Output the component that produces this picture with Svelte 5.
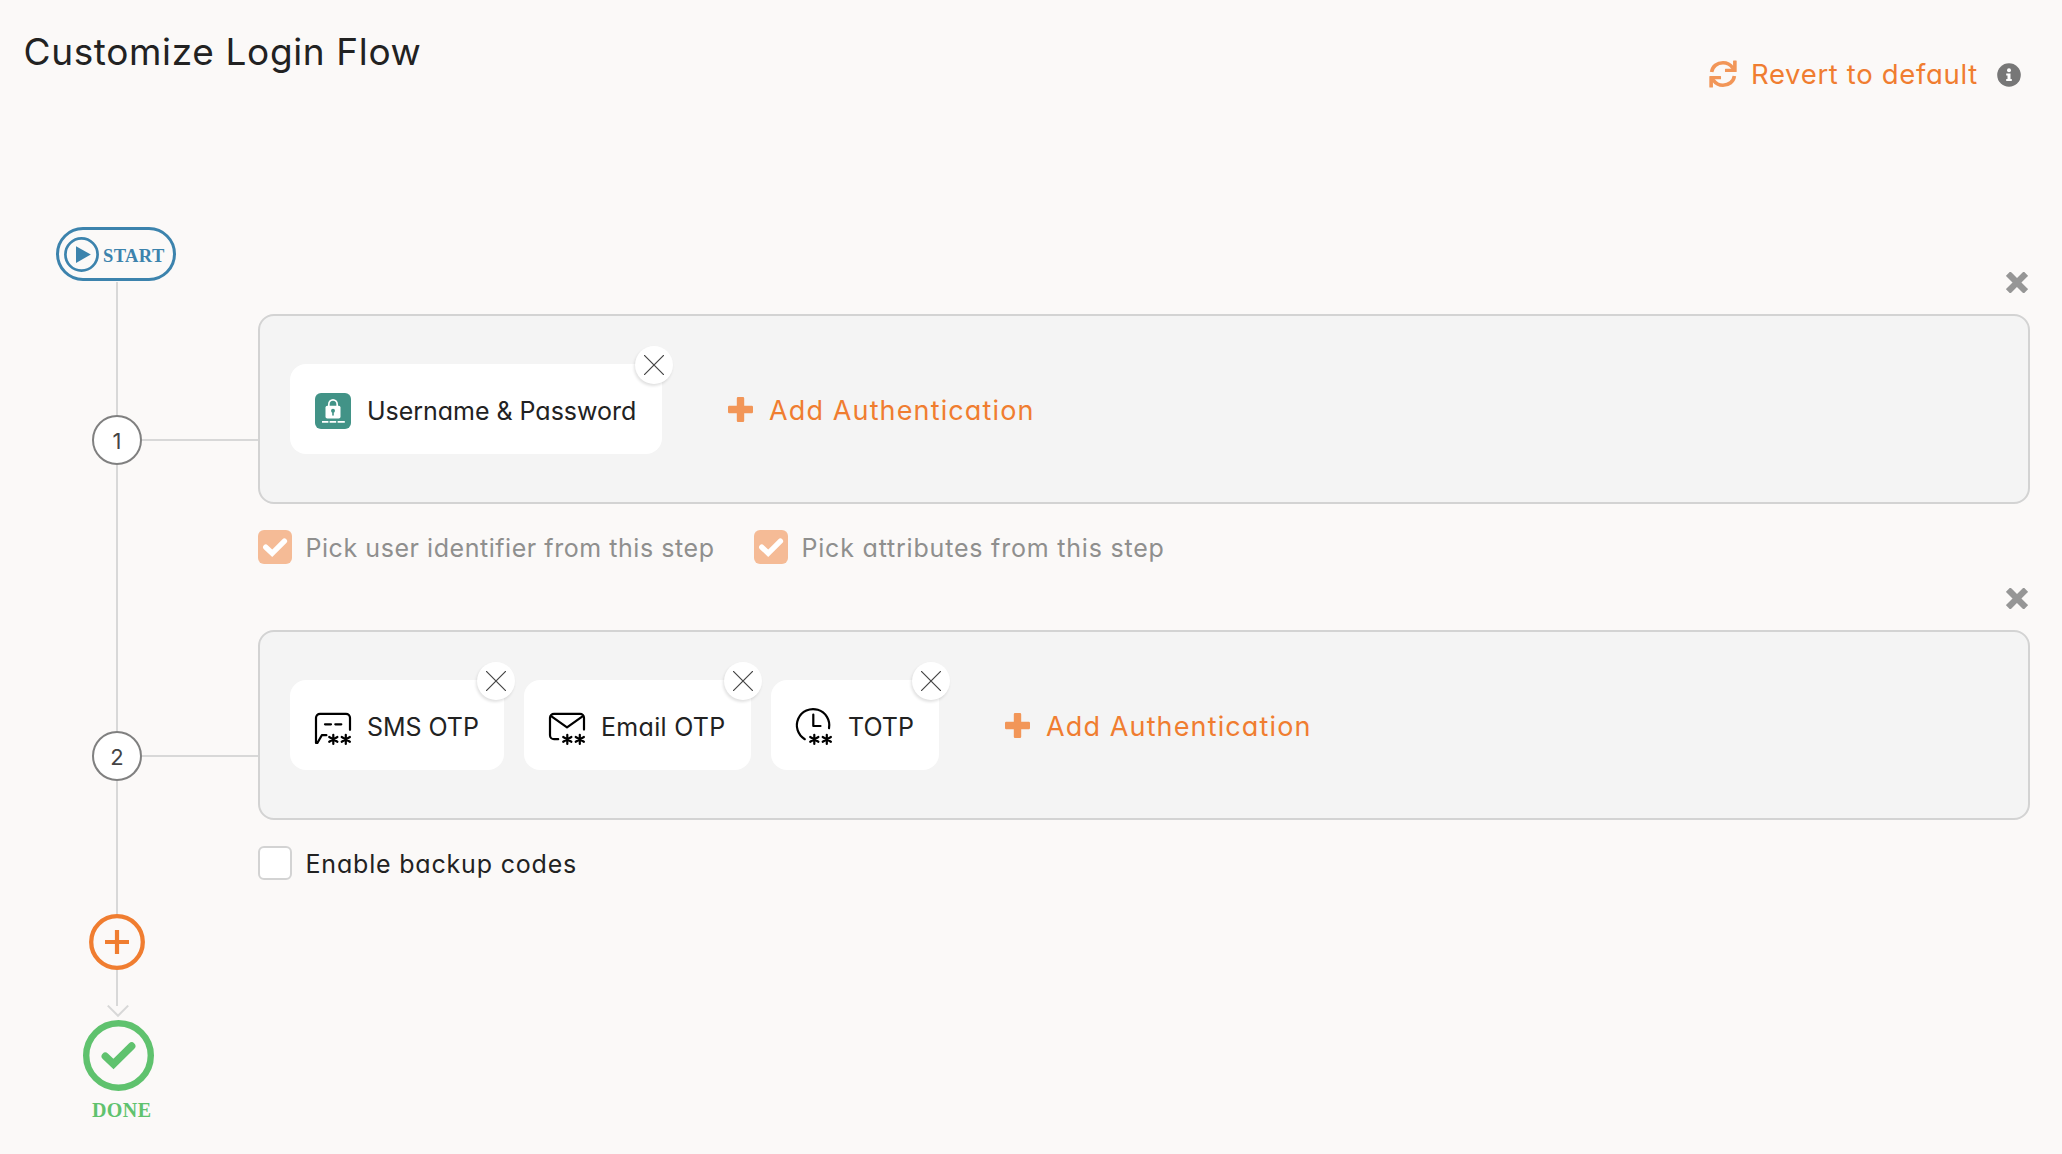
<script>
  const steps = [
    {
      methods: [{ icon: 'password', label: 'Username & Password', size: 'wide' }],
      options: [
        { label: 'Pick user identifier from this step', checked: true, kind: 'identifier' },
        { label: 'Pick attributes from this step', checked: true, kind: 'attributes' }
      ]
    },
    {
      methods: [
        { icon: 'sms', label: 'SMS OTP', size: 'sms' },
        { icon: 'email', label: 'Email OTP', size: 'email' },
        { icon: 'totp', label: 'TOTP', size: 'totp' }
      ],
      options: [{ label: 'Enable backup codes', checked: false, kind: 'backup' }]
    }
  ];
</script>

{#snippet stars()}
  <path d="M18.3 25.8v9.2M14.2 28l8.2 4.8M22.4 28l-8.2 4.8M30.8 25.8v9.2M26.7 28l8.2 4.8M34.9 28l-8.2 4.8" stroke-width="2.2" />
{/snippet}

{#snippet methodIcon(name)}
  {#if name === 'password'}
    <svg class="icon" viewBox="0 0 36 36">
      <rect width="36" height="36" rx="6" fill="#429387" />
      <path d="M13.8 14v-2.6a4.2 4.6 0 0 1 8.4 0V14" fill="none" stroke="#fff" stroke-width="1.7" />
      <rect x="10.5" y="12.8" width="15" height="12.8" rx="1.8" fill="#fff" />
      <circle cx="18" cy="17.8" r="2" fill="#429387" />
      <rect x="17.2" y="18" width="1.6" height="4.8" rx=".8" fill="#429387" />
      <path d="M7 28.8h6.4M14.6 28.8h6.6M22.6 28.8h7.2" stroke="#fff" stroke-width="1.7" />
    </svg>
  {:else if name === 'sms'}
    <svg class="icon line" viewBox="0 0 36 36">
      <path d="M35 20.8V8.8A4 4 0 0 0 31 4.8H5A4 4 0 0 0 1 8.8V34H2.4L6.8 26.2H11.4" />
      <path d="M10 15.3h6M20.3 15.3h6" />
      {@render stars()}
    </svg>
  {:else if name === 'email'}
    <svg class="icon line" viewBox="0 0 36 36">
      <path d="M35 20.6V8.8A4 4 0 0 0 31 4.8H5A4 4 0 0 0 1 8.8V26.2A4 4 0 0 0 5 30.2H9.2" />
      <path d="M1.8 6.8L18 18.4 34.2 6.8" />
      {@render stars()}
    </svg>
  {:else}
    <svg class="icon line" viewBox="0 0 36 36">
      <path d="M33 19.2A16.2 16.2 0 1 0 8.8 30.2" />
      <path d="M17.3 5.5V17H24.5" />
      {@render stars()}
    </svg>
  {/if}
{/snippet}

<div class="page">
  <header>
    <h1>Customize Login Flow</h1>
    <div class="revert">
      <svg class="refresh" viewBox="0 0 512 512"><path fill="none" stroke="#f29658" stroke-width="66" d="M48 220C63 115 150 51 256 51c76 0 136 35 176 91M464 292C449 397 362 461 256 461c-76 0-136-35-176-91" /><path fill="#f29658" d="M440 18q0-10 12-10h44q10 0 10 10v190q0 10-10 10H302q-10 0-10-10v-38q0-10 10-10h96l42-36zM72 494q0 10-12 10H16q-10 0-10-10V304q0-10 10-10h194q10 0 10 10v38q0 10-10 10h-96l-42 36z" /></svg>
      <span>Revert to default</span>
      <svg class="info" viewBox="0 0 24 24">
        <circle cx="12" cy="12" r="11.8" fill="#777" />
        <circle cx="12" cy="7.2" r="2" fill="#fff" />
        <path fill="#fff" d="M9.2 10.6h4.3v5.5h1.3v2H9.2v-2h1.3v-3.5H9.2z" />
      </svg>
    </div>
  </header>

  <main>
    <aside>
      <div class="start">
        <svg class="play" viewBox="0 0 35 35">
          <circle cx="17.5" cy="17.5" r="16.1" fill="none" stroke="#3c83ad" stroke-width="2.7" />
          <path d="M12 9.2L26.8 17.6 12 26z" fill="#3c83ad" />
        </svg>
        <span>START</span>
      </div>
      <div class="rail first"></div>
      <div class="node"><span class="number">1</span><span class="branch"></span></div>
      <div class="rail between"></div>
      <div class="node"><span class="number">2</span><span class="branch"></span></div>
      <div class="rail after"></div>
      <svg class="add-step" viewBox="0 0 56 56">
        <circle cx="28" cy="28" r="25.8" fill="none" stroke="#f07d30" stroke-width="4.3" />
        <path d="M28 16v24M16 28h24" stroke="#f07d30" stroke-width="4.2" />
      </svg>
      <div class="rail last"></div>
      <svg class="chevron" viewBox="0 0 22 13"><path d="M.8.6L11 10.8 21.2.6" fill="none" stroke="#d8d8d8" stroke-width="2" /></svg>
      <svg class="done" viewBox="0 0 71 71">
        <circle cx="35.5" cy="35.5" r="32.3" fill="none" stroke="#5fc26e" stroke-width="6.4" />
        <path d="M22.3 36.2L30.5 44 48.7 26" fill="none" stroke="#5fc26e" stroke-width="7.4" stroke-linecap="round" />
      </svg>
      <span class="done-label">DONE</span>
    </aside>

    <div class="steps">
      {#each steps as step}
        <section>
          <svg class="remove" viewBox="0 0 22 22"><path d="M4 4l14 14M18 4L4 18" stroke="#969696" stroke-width="6.6" stroke-linecap="square" stroke-linejoin="round" /></svg>
          <div class="panel">
            <div class="methods">
              {#each step.methods as method}
                <div class="chip">
                  {@render methodIcon(method.icon)}
                  <span class="name {method.size}">{method.label}</span>
                  <span class="close"><svg viewBox="0 0 20 20"><path d="M0 0L20 20M20 0L0 20" stroke="#444" stroke-width="1.2" /></svg></span>
                </div>
              {/each}
            </div>
            <div class="add">
              <svg viewBox="0 0 25 25"><path fill="#f29658" d="M10 0h5q1.2 0 1.2 1.2v7.6h7.6Q25 8.8 25 10v5q0 1.2-1.2 1.2h-7.6v7.6Q16.2 25 15 25h-5q-1.2 0-1.2-1.2v-7.6H1.2Q0 16.2 0 15v-5q0-1.2 1.2-1.2h7.6V1.2Q8.8 0 10 0z" /></svg>
              <span>Add Authentication</span>
            </div>
          </div>
          <div class="options">
            {#each step.options as option}
              <div class="option {option.kind}" class:muted={option.checked}>
                <span class="box">
                  {#if option.checked}
                    <svg viewBox="0 0 34 34"><path d="M7.8 17.2L14.2 23.3 26.4 11.2" fill="none" stroke="#fff" stroke-width="5.4" stroke-linecap="round" /></svg>
                  {/if}
                </span>
                <span>{option.label}</span>
              </div>
            {/each}
          </div>
        </section>
      {/each}
    </div>
  </main>
</div>

<style>
  :global(body) { margin: 0; background: #fbf9f8; }
  .page {
    width: 2062px;
    height: 1154px;
    box-sizing: border-box;
    overflow: hidden;
    background: #fbf9f8;
    color: #222;
    font-family: Inter, 'Liberation Sans', sans-serif;
    font-weight: 400;
    font-feature-settings: 'cv11';
  }
  svg { display: block; flex: none; }
  span { white-space: nowrap; }
  header {
    height: 227px;
    display: flex;
    justify-content: space-between;
    align-items: flex-start;
  }
  h1 {
    margin: 30px 0 0 23.5px;
    font-size: 37px;
    line-height: 44px;
    font-weight: 400;
    letter-spacing: 0.64px;
  }
  .revert {
    display: flex;
    align-items: center;
    width: 353px;
    height: 32px;
    margin-top: 59px;
    color: #f07d30;
    font-size: 27.5px;
    line-height: 32px;
    letter-spacing: 0.66px;
  }
  .refresh { width: 28px; height: 28px; margin-bottom: 3px; }
  .revert span { width: 244px; margin: 0 0 2px 14px; }
  .info { width: 24px; height: 24px; margin-left: 2px; }

  main { display: flex; align-items: flex-start; }
  aside { width: 258px; display: flex; flex-direction: column; }
  .start {
    box-sizing: border-box;
    width: 120px;
    height: 54px;
    margin-left: 56px;
    padding-left: 5px;
    border: 3px solid #3c83ad;
    border-radius: 27px;
    display: flex;
    align-items: center;
    color: #3c83ad;
    font: bold 18.5px/24px 'Liberation Serif', serif;
    letter-spacing: 0.4px;
  }
  .play { width: 35px; height: 35px; }
  .start span { margin: 3px 0 0 4px; }
  .rail { width: 2px; margin-left: 116px; background: #d8d8d8; }
  .first { height: 133px; margin-top: 1px; }
  .between { height: 266px; }
  .after { height: 133px; }
  .last { height: 36px; }
  .node { display: flex; align-items: center; height: 50px; padding-left: 92px; }
  .number {
    box-sizing: border-box;
    width: 50px;
    height: 50px;
    border: 2px solid #808080;
    border-radius: 50%;
    background: #fff;
    color: #444;
    font-size: 22px;
    line-height: 48px;
    text-align: center;
  }
  .branch { flex: 1; height: 2px; background: #d8d8d8; }
  .add-step { width: 56px; height: 56px; margin-left: 89px; }
  .chevron { width: 22px; height: 13px; margin: -1px 0 0 107px; }
  .done { width: 71px; height: 71px; margin: 2px 0 0 82.5px; }
  .done-label {
    margin: 7px 0 0 92px;
    color: #5fc26e;
    font: bold 20px/24px 'Liberation Serif', serif;
    letter-spacing: 0.4px;
  }

  .steps { width: 1772px; padding-top: 45px; }
  section { height: 316px; }
  .remove { width: 22px; height: 21px; margin: 0 2px 21px auto; }
  .panel {
    box-sizing: border-box;
    height: 190px;
    padding-left: 30px;
    border: 2px solid #d3d3d3;
    border-radius: 16px;
    background: #f4f4f4;
    display: flex;
    align-items: center;
  }
  .methods { display: flex; gap: 20px; }
  .chip {
    position: relative;
    display: flex;
    align-items: center;
    gap: 16px;
    height: 90px;
    padding: 0 25px;
    border-radius: 16px;
    background: #fff;
  }
  .icon { width: 36px; height: 36px; margin-top: 4px; overflow: visible; }
  .line { fill: none; stroke: #000; stroke-width: 2.2; stroke-linecap: round; stroke-linejoin: round; }
  .name { font-size: 25px; line-height: 32px; margin-top: 3px; }
  .wide { width: 270px; letter-spacing: -0.03px; }
  .sms { width: 112px; letter-spacing: -0.05px; }
  .email { width: 125px; letter-spacing: 0.3px; }
  .totp { width: 66px; }
  .close {
    position: absolute;
    top: -18px;
    right: -11px;
    width: 38px;
    height: 38px;
    border-radius: 50%;
    background: #fff;
    box-shadow: -1px 2px 3px rgba(0, 0, 0, 0.12);
    display: flex;
    align-items: center;
    justify-content: center;
  }
  .close svg { width: 20px; height: 20px; }
  .add {
    display: flex;
    align-items: center;
    gap: 16px;
    margin-left: 66px;
    color: #f07d30;
    font-size: 27px;
    line-height: 32px;
    letter-spacing: 1.13px;
  }
  .add svg { width: 25px; height: 25px; margin-top: 1px; }
  .add span { margin-top: 3px; }
  .options { display: flex; gap: 40px; margin-top: 25px; }
  .option { display: flex; align-items: center; gap: 13.5px; font-size: 25px; line-height: 34px; }
  .box {
    flex: none;
    box-sizing: border-box;
    width: 34px;
    height: 34px;
    border: 2px solid #d3d3d3;
    border-radius: 6px;
    background: #fff;
  }
  .muted { color: #8f8f8e; }
  .muted .box { border: 0; background: #f5bb96; }
  .identifier { width: 456px; letter-spacing: 0.55px; }
  .attributes { letter-spacing: 0.8px; }
  .backup { letter-spacing: 0.81px; }
  .option span:last-child { margin-top: 2px; }
</style>
